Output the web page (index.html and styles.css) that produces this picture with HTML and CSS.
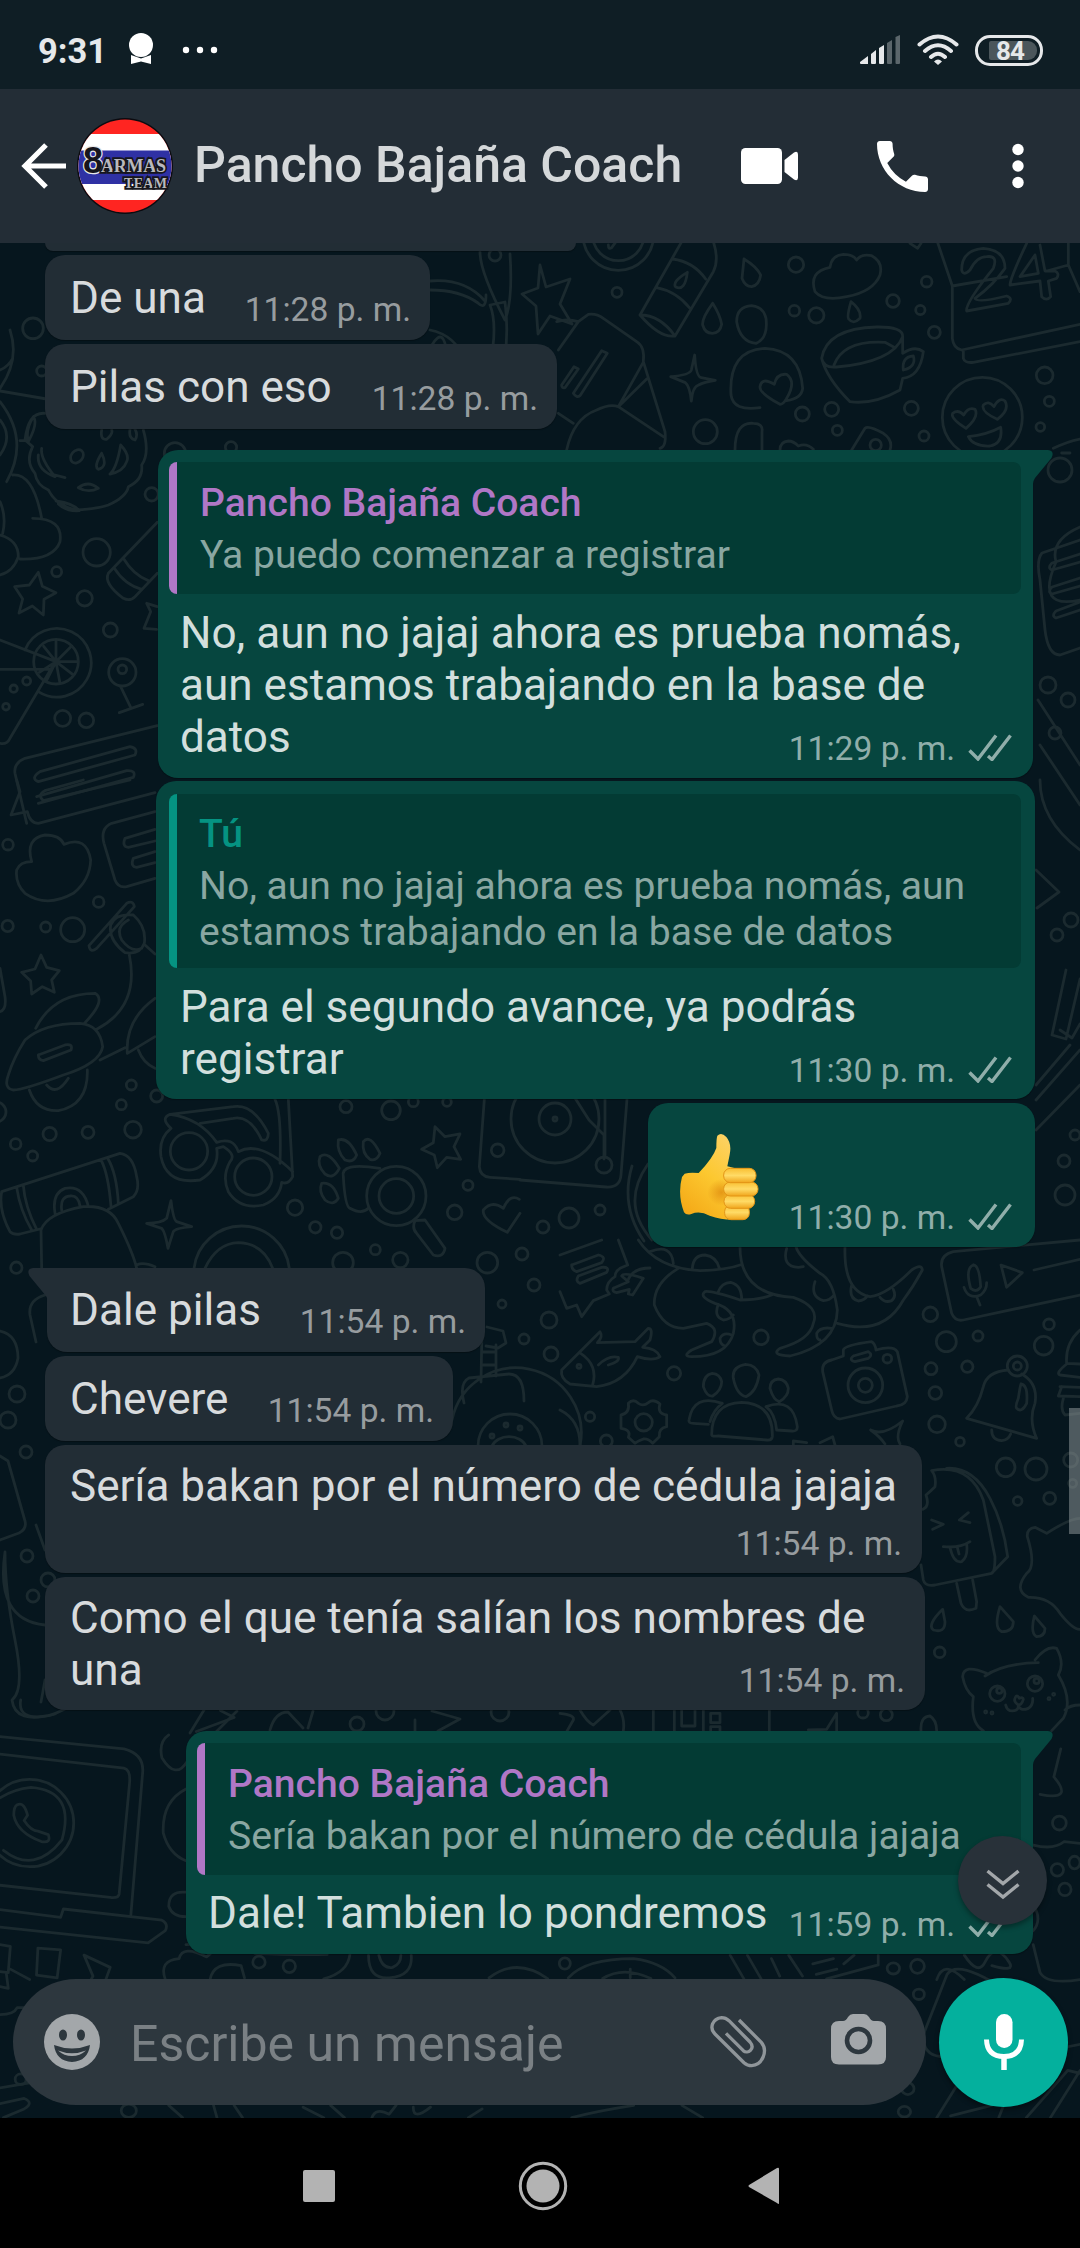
FILE: index.html
```html
<!DOCTYPE html>
<html lang="es">
<head>
<meta charset="utf-8">
<title>Pancho Bajaña Coach</title>
<link rel="stylesheet" href="styles.css">
</head>
<body>
<svg width="0" height="0" class="defs">
  <symbol id="ticks" viewBox="0 0 44 27"><path d="M1.5 16.5 L10 25 L28 1.5 M20 22 L24 25.500 L42.500 1.500" fill="none" stroke="currentColor" stroke-width="3.400"/></symbol>
  <symbol id="tail-out" viewBox="0 0 24 34"><path d="M0 0H19Q26 1 22.500 8L6 28Q4 31 4 34H0Z" fill="currentColor"/></symbol>
</svg>
<div class="screen">
  <header class="status">
    <span class="clock">9:31</span>
    <svg class="badge" width="26" height="32" viewBox="0 0 26 32"><circle cx="13" cy="12" r="12" fill="#fff"/><path d="M3 22l10 3.500 10-3.500v9l-10-2.500-10 2.500z" fill="#fff"/></svg>
    <svg class="more" width="36" height="8" viewBox="0 0 36 8" fill="#fff"><circle cx="4" cy="4" r="3.200"/><circle cx="18" cy="4" r="3.200"/><circle cx="32" cy="4" r="3.200"/></svg>
    <svg class="signal" width="41" height="30" viewBox="0 0 41 30"><g fill="#e6e8ea"><path d="M0 27l8-6v8H1q-1 0-1-1zM11 19l5-4v13q0 1-1 1h-3q-1 0-1-1zM19 13l5-3v18q0 1-1 1h-3q-1 0-1-1z"/></g><path d="M27 8l5-3v23q0 1-1 1h-3q-1 0-1-1zM35.500 2l4.500-2v28q0 1-1 1h-2.500q-1 0-1-1z" fill="#5b666b"/></svg>
    <svg class="wifi" width="42" height="32" viewBox="0 0 42 32" fill="none" stroke="#e6e8ea" stroke-width="4" stroke-linecap="round"><path d="M2.500 10.500Q21-5.500 39.500 10.500M8 17Q21 5.500 34 17M14 23Q21 16.500 28 23"/><path d="M21 31l-4-3.500q4-4 8 0z" fill="#e6e8ea" stroke="none"/></svg>
    <div class="battery"><span>84</span></div>
  </header>

  <header class="appbar">
    <svg class="back" width="46" height="46" viewBox="0 0 46 46" fill="none" stroke="#fff" stroke-width="5.200"><path d="M45 23H4M25 2L4 23L25 44"/></svg>
    <svg class="avatar" width="96" height="96" viewBox="0 0 96 96">
      <defs><clipPath id="round"><circle cx="48" cy="48" r="46.500"/></clipPath></defs>
      <circle cx="48" cy="48" r="48" fill="#0b0b10"/>
      <g clip-path="url(#round)"><path fill="#ff2521" d="M0 0h96v96H0z"/><path fill="#fff" d="M0 16h96v66H0z"/><path fill="#2f31a4" d="M0 32.500h96v33.500H0z"/></g>
      <g font-family="Liberation Serif, serif" font-weight="700" fill="#3a3a4a" stroke="#16161c" stroke-width="3.600" paint-order="stroke">
        <text x="6" y="55" font-size="36" font-family="Liberation Sans, sans-serif" fill="#16161c" stroke="#e8e8e8" stroke-width="2.400">8</text>
        <text x="24" y="54" font-size="18" textLength="65" fill="#b9b9bd">ARMAS</text>
        <text x="47" y="70" font-size="14" textLength="43" fill="#b9b9bd">TEAM</text>
      </g>
    </svg>
    <h1>Pancho Bajaña Coach</h1>
    <svg class="video" width="58" height="36" viewBox="0 0 58 36" fill="#fff"><rect width="41" height="36" rx="4.500"/><path d="M43.500 12L53 4.500q4-2 4 2v23q0 4-4 2L43.500 24z"/></svg>
    <svg class="phone" width="51" height="51" viewBox="3 3 18 18" fill="#fff"><path d="M6.620 10.790a15.150 15.150 0 0 0 6.590 6.590l2.200-2.200c.28-.28.67-.36 1.020-.25 1.120.37 2.320.57 3.570.57.550 0 1 .450 1 1V20c0 .550-.450 1-1 1C10.610 21 3 13.390 3 4c0-.550.450-1 1-1h3.500c.550 0 1 .450 1 1 0 1.250.200 2.450.570 3.570.110.350.030.740-.250 1.020z"/></svg>
    <svg class="kebab" width="12" height="46" viewBox="0 0 12 46" fill="#fff"><circle cx="6" cy="6.500" r="5.700"/><circle cx="6" cy="23" r="5.700"/><circle cx="6" cy="39.500" r="5.700"/></svg>
  </header>

  <main class="chat">
    <svg class="wallpaper" width="1080" height="1875" viewBox="0 243 1080 1875">
      <!-- top right: bottle, cloud, cup, calendar -->
      <g transform="translate(560 235) scale(.33333)">
        <circle cx="175" cy="0" r="106"/><circle cx="175" cy="0" r="77"/><path d="M145 30q0 15 10 8l20-28M365 20L240 240Q300 310 345 303L460 110Q478 75 460 20M338 72Q400 80 437 132M290 158Q350 170 388 218M240 240Q300 240 345 303M382 112Q335 140 347 156Q375 170 382 112"/>
        <path d="M552 72L546 130Q555 155 575 155Q598 150 602 120Q590 95 552 72M458 205Q425 250 428 270Q435 295 457 295Q480 295 485 268Q480 240 458 205M873 200Q860 245 866 252Q880 270 900 250Q905 225 873 200"/>
        <path d="M810 97Q815 60 850 58Q880 58 890 75Q905 55 935 62Q970 80 960 120Q940 170 860 185Q790 200 765 170Q745 110 810 97"/>
        <path d="M575 212Q530 215 530 260Q540 320 588 325Q625 310 618 250Q610 215 575 212M600 518Q520 530 513 480Q505 345 615 340Q720 345 728 460Q725 490 680 497M660 508Q598 475 600 455Q605 425 643 448Q650 415 680 418Q710 440 680 490Q670 508 660 508"/>
        <path d="M404 360q4 66 20 68l42 8q-35 5-50 14q-18 5-22 48q-5-45-18-55l-44-18q58-5 62-20z"/>
        <path d="M-10 260q30-10 65 0L85 238Q110 235 130 250L230 320Q255 335 250 380L315 590Q320 635 300 640M55 260L-5 345M248 385L175 515L310 605M20 645Q40 550 110 525Q150 505 175 515L260 432M-5 535l45 30M125 347L40 475Q50 490 60 482L142 355ZM42 395L5 450Q5 460 15 458L55 402Z"/>
        <path d="M785 370Q800 280 950 276Q1030 275 1028 305Q1000 380 830 396Q790 400 785 370Q800 430 870 500Q940 510 1020 465L1028 430Q1080 425 1090 350Q1065 330 1028 355V305M822 390Q850 315 975 322L1005 338M1030 405Q1025 365 1060 363Q1070 395 1030 405"/>
        <path d="M1132 20L1177 153L1340 125M1177 153V310Q1180 340 1205 345L1560 268M1210 345V370Q1215 385 1240 382L1560 320M1220 228Q1215 205 1300 100Q1315 60 1280 65Q1250 65 1230 105Q1210 125 1205 105Q1205 45 1270 40Q1335 45 1335 100Q1300 150 1245 190Q1250 205 1340 183Q1360 190 1345 205ZM1440 30L1455 108H1485Q1500 115 1490 130L1465 138L1472 185Q1460 200 1445 185L1440 138L1350 150Q1350 130 1400 25M1380 125L1435 115L1425 60ZM1460 108L1525 90V20M1525 90L1560 170"/>
        <circle cx="1267" cy="547" r="120"/><path d="M1218 580Q1170 550 1178 535Q1195 522 1211 540Q1225 515 1245 523Q1258 545 1218 580M1312 553Q1262 530 1270 510Q1285 495 1302 515Q1318 485 1335 498Q1350 525 1312 553M1225 605Q1280 600 1322 577Q1330 625 1290 633Q1240 635 1225 605M525 645Q525 560 580 565Q610 565 606 590V645M660 645q0-25 25-27q15 0 30 15q25-10 45 10M875 645L915 580Q925 570 970 595Q1000 615 990 645M1050 25l23 15 10-15M1480 640Q1520 620 1560 612M1505 654h25"/>
        <circle cx="171" cy="172" r="15"/><circle cx="708" cy="89" r="23"/><circle cx="703" cy="227" r="16"/><circle cx="769" cy="241" r="23"/><circle cx="999" cy="198" r="19"/><circle cx="1100" cy="140" r="16"/><circle cx="1081" cy="225" r="14"/><circle cx="1123" cy="292" r="18"/><circle cx="436" cy="590" r="36"/><circle cx="727" cy="537" r="21"/><circle cx="815" cy="523" r="21"/><circle cx="832" cy="586" r="15"/><circle cx="1054" cy="520" r="21"/><circle cx="1092" cy="603" r="15"/><circle cx="947" cy="630" r="17"/><circle cx="1454" cy="421" r="25"/><circle cx="1468" cy="499" r="15"/><circle cx="1441" cy="576" r="13"/>
      </g>
      <!-- top centre: star, carrot and pin -->
      <path d="M540 265l6 22 24-8-10 25 12 20-22-8-12 18-2-28-14-12 16-6zM430 281q35-3 55 20M430 290q30 0 48 13q8 8 8-8M490 365q8-40 0-60l15-3q4 30-1 65M480 252q0 20 25 68q8-20 5-66M430 330q25 5 35 30M432 345q12-20 15 10q20 5 20 30"/>
      <circle cx="495" cy="255" r="6"/>
      <!-- left: cookie, palette, citrus, message sheet -->
      <g transform="translate(0 330) scale(.33333)">
        <path d="M30 0Q60 90 0 175M0 120Q25 110 38 85M0 183L140 207M0 215Q90 330 20 455M0 270Q40 320 0 375M38 435Q100 430 125 565M98 565Q190 565 180 635Q160 690 60 687M0 515Q20 560 8 610M0 615Q55 630 55 680Q40 725 0 735"/>
        <path d="M135 250Q85 245 75 330L98 350Q75 395 105 430Q110 465 145 480Q170 530 230 540Q300 535 325 525Q380 500 385 470Q430 450 425 405Q450 370 430 300M85 335Q75 300 100 260Q115 280 85 335M60 332h15M125 355Q120 385 165 440Q110 420 115 375M165 435l30 8M168 513Q220 520 238 542Q200 545 175 522M235 473Q265 450 295 475Q265 490 235 473M330 432Q350 415 362 345Q390 375 380 395Q370 425 330 432M305 370Q280 410 295 418Q325 410 305 370M305 300Q300 330 320 328Q340 310 335 300M390 298Q385 325 405 330Q415 315 405 298"/><ellipse cx="231" cy="379" rx="17" ry="22" transform="rotate(40 231 379)"/>
        <path d="M115 727L127 769L168 788L132 808L130 855L97 828L57 849L68 807L44 770L88 765ZM472 577L325 730Q310 760 370 805Q390 815 405 800L472 730M343 715Q375 765 425 778M370 685Q400 735 445 752"/>
        <path d="M440 820L452 845L432 895L470 898M440 820l32 10"/>
        <circle cx="168" cy="995" r="67"/><path d="M75 960A103 103 0 1 1 115 1085M168 995V930M168 995l44-44M168 995h65M168 995l50 38M168 995l12 65M168 995l-30 60M168 995l-50 32M168 995l-37-46M168 995L0 930M150 1018H0M160 1005L30 1225Q20 1245 0 1240M362 1070L392 1132M358 1148L428 1123"/>
        <circle cx="367" cy="1027" r="41"/><circle cx="367" cy="1018" r="13"/><circle cx="290" cy="667" r="41"/><circle cx="170" cy="725" r="15"/><circle cx="254" cy="805" r="23"/><circle cx="331" cy="900" r="21"/><circle cx="188" cy="1165" r="24"/><circle cx="259" cy="1171" r="22"/><circle cx="80" cy="1053" r="12"/><circle cx="41" cy="1076" r="11"/><circle cx="18" cy="1130" r="10"/><circle cx="455" cy="493" r="20"/><circle cx="525" cy="370" r="32"/><circle cx="693" cy="352" r="17"/><circle cx="99" cy="-5" r="31"/><circle cx="125" cy="123" r="15"/>
        <path d="M472 1187L75 1285Q40 1300 45 1330L80 1480M120 1325L390 1250Q415 1255 405 1275L115 1355Q90 1345 120 1325M110 1400L380 1322Q410 1320 400 1342L115 1420"/>
      </g>
      <!-- left: cloud, plane, glasses, board, paw, lens -->
      <g transform="translate(0 780) scale(.33333)">
        <path d="M50 0L60 35L33 105L82 95Q90 130 115 130L465 38M135 32L250 0M130 62L390 0M135 32Q110 45 130 62M465 95L335 130Q300 145 312 190L345 300Q355 325 380 320L465 295M465 148L375 175Q365 200 385 202L465 183M465 215L400 235Q390 260 410 262L465 248"/>
        <path d="M95 245Q75 175 135 165Q180 165 192 193Q260 165 272 240Q270 300 220 340Q140 385 75 340Q45 310 50 270Q60 245 95 245M123 525L140 562L178 572L155 600L163 637L127 620L95 642L92 603L65 577L105 567ZM380 370Q400 360 403 380L290 505Q270 520 267 497ZM400 405Q440 440 433 490Q420 525 375 518Q325 480 332 435Q345 400 400 405M385 420Q345 440 365 480Q395 520 425 505M435 495L465 522M388 525Q420 680 290 748M107 745Q160 640 285 640Q320 660 255 728M75 780Q130 730 240 730Q300 735 308 800Q300 850 190 885Q70 930 40 930Q10 925 25 885Q40 835 75 780M115 825L195 795Q220 790 213 810L130 842Q115 840 115 825M88 930Q110 995 175 992Q265 975 262 870M140 915Q170 950 205 895M300 840L375 803M465 655Q375 720 382 820L465 770M415 810Q430 850 465 865"/>
        <path d="M0 565L15 650Q20 690 0 695M825 958Q845 1000 840 1150M865 958L878 1190Q865 1215 845 1207Q840 1255 790 1275Q720 1290 685 1235Q665 1190 690 1145Q710 1125 670 1100L650 1105Q660 1165 600 1200Q500 1215 483 1130Q475 1075 513 1045Q480 1015 510 1003Q600 1015 650 1087Q700 1070 715 1115Q780 1080 878 1175M510 1003L700 980Q760 970 805 1060Q805 1085 785 1080Q750 1005 700 1015L600 1030"/><circle cx="567" cy="1114" r="56"/><circle cx="760" cy="1190" r="56"/>
        <path d="M5 1235L360 1120Q400 1125 410 1190Q420 1230 400 1250L325 1288M5 1235Q-5 1290 30 1355Q40 1365 60 1362L120 1347M50 1222Q60 1290 95 1350M70 1217Q75 1280 110 1348M303 1140Q325 1180 333 1280M323 1135Q350 1180 355 1270M165 1300Q155 1240 195 1225Q250 1215 265 1280M185 1290Q180 1250 210 1248Q235 1245 240 1278M125 1465L123 1350Q140 1300 250 1280Q330 1275 355 1330Q400 1420 410 1465M513 1262Q520 1320 530 1325L575 1340Q525 1345 520 1355Q515 1370 504 1405Q495 1355 485 1345L440 1330Q485 1330 500 1315ZM582 1465A144 144 0 0 1 868 1465M615 1465Q650 1390 715 1388Q790 1390 818 1465M410 1455q20-10 55 5"/>
        <path d="M1015 1080Q1045 1070 1070 1125Q1060 1150 1035 1140Q1010 1115 1015 1080M1090 1085Q1110 1060 1140 1120Q1130 1145 1110 1138Q1085 1120 1090 1085M960 1130Q985 1110 1018 1165Q1000 1200 975 1182Q950 1155 960 1130M965 1210Q1000 1205 1015 1255Q1000 1280 975 1260Q955 1235 965 1210M1140 1165Q1020 1145 1030 1190Q1035 1280 1050 1285Q1085 1305 1105 1285"/><circle cx="1189" cy="1248" r="89"/><circle cx="1189" cy="1248" r="52"/><path d="M1245 1322Q1235 1345 1250 1360L1300 1425Q1330 1435 1335 1405L1275 1320ZM1305 1040L1335 1070L1380 1062L1362 1100L1382 1138L1340 1132L1312 1163L1303 1125L1265 1108L1300 1088ZM1453 958L1438 1160Q1440 1190 1470 1192L1560 1198M1522 1357Q1445 1320 1450 1290Q1475 1260 1510 1285Q1530 1240 1558 1258M1522 1357L1560 1300"/>
        <circle cx="24" cy="194" r="16"/><circle cx="23" cy="438" r="17"/><circle cx="137" cy="441" r="15"/><circle cx="218" cy="449" r="36"/><circle cx="296" cy="366" r="16"/><circle cx="394" cy="915" r="15"/><circle cx="364" cy="974" r="15"/><circle cx="470" cy="948" r="18"/><circle cx="-12" cy="996" r="30"/><circle cx="149" cy="1062" r="20"/><circle cx="264" cy="1057" r="18"/><circle cx="399" cy="1049" r="25"/><circle cx="47" cy="1092" r="16"/><circle cx="98" cy="1128" r="15"/><circle cx="49" cy="1463" r="17"/><circle cx="885" cy="1283" r="23"/><circle cx="946" cy="1342" r="17"/><circle cx="1011" cy="1358" r="17"/><circle cx="1126" cy="1409" r="15"/><circle cx="1201" cy="1440" r="23"/><circle cx="1029" cy="1448" r="31"/><circle cx="1404" cy="1216" r="15"/><circle cx="1364" cy="1297" r="22"/><circle cx="1462" cy="1448" r="31"/><circle cx="1038" cy="980" r="18"/><circle cx="1173" cy="991" r="28"/><circle cx="1240" cy="965" r="15"/><circle cx="1341" cy="966" r="13"/><circle cx="1493" cy="1111" r="19"/>
      </g>
      <!-- centre: turntable and dinosaur back -->
      <path d="M627 1099L621 1175Q620 1188 606 1187L520 1180M605 1098v58M575 1098l14 22 15 15v24M632 1166q-12 40 12 75M648 1164q-28 40 4 76M628 1280q5-12 22-12"/>
      <circle cx="555" cy="1119" r="44"/><circle cx="555" cy="1119" r="16"/><circle cx="555" cy="1119" r="2"/><circle cx="604" cy="1165" r="8"/><circle cx="569" cy="1218" r="10"/><circle cx="600" cy="1210" r="5"/><circle cx="543" cy="1227" r="6"/><circle cx="522" cy="1254" r="6"/>
      <!-- right edge: papers and ruler -->
      <path d="M1080 527Q1050 540 1056 562Q1035 610 1080 600M1080 540L1042 553Q1036 560 1040 580L1045 630Q1048 655 1060 655L1080 648M1080 554l-28 9q-5 5 0 7l28-8M1080 578l-28 9q-5 5 0 7l28-8M1080 602l-24 9q-5 5 0 7l24-8M1038 700l42 65M1040 745l40 60M1040 780Q1040 820 1080 850M1036 870l23 22-22 16M1066 970l-14 65 14 4 14-60M1060 1030l12 8 8-14M1036 1100L1080 1050M1036 1130L1080 1085M1036 1085l34-40"/>
      <circle cx="1060" cy="470" r="12"/><circle cx="1048" cy="685" r="8"/><circle cx="1068" cy="700" r="7"/><circle cx="1055" cy="733" r="6"/><circle cx="1071" cy="920" r="7"/><circle cx="1057" cy="935" r="6"/><circle cx="1075" cy="1135" r="5"/><circle cx="1064" cy="1161" r="6"/><circle cx="1065" cy="1195" r="10"/>
      <!-- middle right: dinosaur, fish, group, camera, bell, ice cream, cat -->
      <g transform="translate(560 1240) scale(.33333)">
        <path d="M0 45L125 0M175 0L203 75L180 85Q165 95 165 110Q140 125 140 150L148 162L100 182L65 230L50 195L20 205L0 155M35 75L115 45Q140 50 125 68L50 95Q35 90 35 75M55 108L125 82Q150 80 140 97L60 130Q45 125 55 108M160 145L205 125L185 108Q190 95 250 115L218 165L205 162L208 148L170 158Q155 155 160 145"/>
        <path d="M235 0Q290 85 420 92Q500 90 540 75M355 85Q280 130 283 195Q310 265 370 265L440 250Q480 265 455 305L395 330Q365 350 395 350Q500 350 520 280Q535 210 465 190Q415 170 435 155Q450 150 540 180Q600 180 635 165M540 20Q540 165 700 172Q780 200 760 250Q750 300 660 325Q630 345 690 348Q830 315 832 210Q820 120 780 100Q715 50 708 20M855 20Q850 155 930 170Q980 165 1055 90Q1085 70 1087 90Q1060 140 1030 180Q970 290 832 250M270 35Q335 10 340 70M397 85Q400 45 435 45Q470 50 478 85M475 155Q485 128 512 127Q545 135 545 178M475 193Q460 230 490 240Q510 238 520 225M515 285Q490 275 480 295Q480 315 495 318M765 125Q750 170 790 182Q810 182 822 165M815 265Q780 260 770 280Q770 300 780 300M680 25Q665 80 715 82L730 80M875 135Q865 175 895 183Q915 180 922 168M960 172Q975 190 995 182Q1010 170 1000 148"/>
        <path d="M1560 0L1180 35Q1140 45 1145 80L1175 220Q1185 245 1210 240L1560 165M1240 75Q1258 75 1262 140Q1250 160 1232 145Q1215 85 1240 75M1212 142Q1225 180 1262 165Q1280 150 1280 128M1250 170l10 25M1323 75L1387 98L1340 142ZM1422 90L1560 58"/>
        <path d="M5 390L120 275Q130 290 112 308L225 305L265 265Q280 265 270 300L248 322Q290 325 300 350Q280 365 232 350Q195 430 110 440L30 432Q0 415 5 390M62 340Q115 375 98 435M115 375Q145 345 175 352Q180 365 145 375"/><circle cx="57" cy="379" r="6"/>
        <path d="M205 490Q220 475 235 490Q250 500 265 488Q280 475 300 492Q290 520 320 525V560Q295 565 298 590L278 610Q265 595 250 597Q230 605 225 610L205 592Q215 570 183 565V525Q210 520 205 490"/><circle cx="251" cy="547" r="26"/>
        <path d="M557 373Q515 380 520 415Q530 465 558 470Q590 455 597 405Q590 375 557 373M457 400Q430 405 430 440Q440 470 458 468Q485 450 485 425Q480 402 457 400M655 417Q630 420 630 445Q640 480 658 485Q685 470 685 445Q680 420 655 417M455 585Q455 490 545 487Q640 490 637 590Q635 602 620 600L475 588Q455 590 455 585M487 490Q400 460 387 540Q385 550 400 550L445 553M487 490Q460 510 450 545M618 500Q700 470 712 560Q712 575 695 573L650 570M618 500Q645 520 650 570"/>
        <path d="M815 360L850 348V330Q855 315 935 305Q945 310 948 330Q1000 315 1012 335L1042 470Q1040 495 1010 498L840 537Q820 535 815 510L788 395Q785 365 815 360M880 348L925 335Q940 345 925 355L885 365Q865 360 880 348"/><circle cx="916" cy="436" r="52"/><circle cx="916" cy="436" r="21"/><circle cx="982" cy="356" r="13"/>
        <path d="M1345 390Q1280 395 1270 440Q1255 500 1220 535L1430 595Q1405 540 1425 490Q1435 430 1385 402M1383 432Q1405 435 1400 490Q1385 520 1370 505Q1365 500 1375 475Q1380 440 1383 432M1295 570Q1295 600 1325 602Q1345 600 1352 582"/><circle cx="1372" cy="378" r="30"/><circle cx="1372" cy="378" r="12"/>
        <path d="M1560 270Q1515 310 1520 370L1560 372M1520 372Q1485 400 1500 405L1560 412M1500 440L1560 442M1560 470L1495 468L1505 440M1510 475Q1500 510 1515 525L1560 520M700 615V603L740 608M780 608L818 590L825 615M932 570Q970 590 1028 543Q1005 590 1020 612M932 570Q960 590 975 612M0 510Q60 540 60 615"/>
        <path d="M1115 692Q1230 670 1270 780L1305 950Q1305 995 1295 1000L1125 1035Q1095 1040 1090 1020L1083 975M1295 1000L1343 950Q1330 850 1290 775Q1240 680 1160 685M1115 692Q1130 710 1125 740Q1110 755 1098 765Q1110 800 1088 808M1115 840L1150 853L1118 868M1225 818L1198 840L1230 848M1150 920Q1200 925 1230 905M1170 922Q1180 970 1205 965Q1225 950 1220 912M1192 922l5 20M1190 1030L1203 1090Q1215 1120 1248 1105L1250 1085L1238 1020"/>
        <path d="M1560 835Q1530 835 1460 880L1425 862Q1400 865 1402 890Q1430 980 1400 1000Q1360 1050 1405 1072Q1470 1070 1500 1120Q1540 1170 1560 1168M1148 1108Q1100 1155 1120 1170Q1155 1180 1155 1145ZM1320 1100Q1300 1165 1325 1175Q1360 1175 1360 1145ZM1423 1128Q1410 1180 1430 1190Q1455 1190 1455 1165Z"/>
        <path d="M1275 1308Q1330 1270 1435 1268M1280 1300Q1210 1270 1208 1310Q1215 1350 1240 1370Q1230 1450 1270 1472M1425 1260Q1460 1215 1490 1225Q1515 1270 1495 1305Q1540 1380 1510 1435L1475 1472M1365 1375Q1370 1360 1378 1375Q1390 1370 1390 1378Q1385 1395 1375 1395Q1360 1385 1365 1375M1375 1395Q1380 1415 1405 1405Q1420 1395 1418 1375M1375 1398Q1375 1415 1350 1412Q1340 1408 1337 1395M1560 1395Q1530 1395 1515 1410"/><circle cx="1312" cy="1361" r="23"/><circle cx="1425" cy="1331" r="23"/><circle cx="1318" cy="1352" r="8"/><circle cx="1430" cy="1323" r="8"/><circle cx="1277" cy="1416" r="3"/><circle cx="1296" cy="1419" r="3"/><circle cx="1467" cy="1376" r="3"/><circle cx="1481" cy="1363" r="3"/>
        <path d="M0 1420Q45 1425 40 1440L20 1475M60 1410Q80 1445 100 1455L150 1410M180 1410Q195 1440 190 1472M280 1410V1472M343 1410V1472M365 1410V1458H405V1410M430 1410V1472M452 1420H480V1448H452ZM452 1472V1460H480V1472M628 1410V1472M745 1470L800 1468L830 1420V1472M1083 1472Q1080 1430 1110 1428Q1130 1440 1130 1472"/>
        <circle cx="603" cy="292" r="22"/><circle cx="342" cy="400" r="20"/><circle cx="90" cy="530" r="14"/><circle cx="139" cy="603" r="18"/><circle cx="1111" cy="223" r="22"/><circle cx="1159" cy="305" r="30"/><circle cx="1254" cy="288" r="15"/><circle cx="1113" cy="386" r="18"/><circle cx="1222" cy="380" r="17"/><circle cx="1126" cy="459" r="19"/><circle cx="1131" cy="553" r="25"/><circle cx="1200" cy="605" r="13"/><circle cx="1467" cy="253" r="16"/><circle cx="1451" cy="317" r="28"/><circle cx="1337" cy="682" r="28"/><circle cx="1428" cy="687" r="33"/><circle cx="1373" cy="783" r="13"/><circle cx="1469" cy="775" r="18"/><circle cx="1532" cy="660" r="21"/><circle cx="1538" cy="730" r="12"/><circle cx="1139" cy="1237" r="16"/><circle cx="909" cy="1418" r="16"/><circle cx="979" cy="1424" r="18"/>
      </g>
      <!-- guitar beside the received messages -->
      <path d="M487 1327l16 4 3 12-8 5-12-2M482 1327l-1 55M496 1345v31M482 1352h14M482 1365h14M464 1403q-5-20 5-25l40-4q15 0 15 27M452 1420a65 65 0 0 1 128 26M478 1446a32 32 0 0 1 64 0M492 1446a18 14 0 0 1 34 0"/>
      <circle cx="534" cy="1285" r="6"/><circle cx="549" cy="1320" r="8"/><circle cx="524" cy="1339" r="5"/><circle cx="551" cy="1354" r="7"/><circle cx="506" cy="1425" r="2"/><circle cx="520" cy="1428" r="2"/><circle cx="492" cy="1436" r="2"/><circle cx="502" cy="1304" r="4"/>
      <path d="M45 1295Q28 1300 30 1315L36 1342M0 1331Q18 1335 18 1358Q15 1375 0 1378M0 1456l8 5 17 60q2 8-6 12L0 1540M36 1525l9 25M5 1552Q-5 1620 45 1625M5 1552Q5 1590 15 1640Q25 1690 12 1700Q15 1725 55 1714M45 1680l-4 22M190 1733l14-23M215 1733l22-22M270 1730q5-18 18-18l15 16M308 1728l5-17M415 1720l0 12M432 1711l28 8-22 12"/>
      <circle cx="17" cy="1394" r="8"/><circle cx="8" cy="1420" r="8"/><circle cx="26" cy="1452" r="6"/><circle cx="27" cy="1556" r="6"/><circle cx="33" cy="1596" r="6"/><circle cx="48" cy="1580" r="7"/><circle cx="357" cy="1724" r="7"/><circle cx="500" cy="1712" r="9"/><circle cx="385" cy="1711" r="9"/>
      <!-- bottom: laptop, blocks, calculator, cup and cutlery -->
      <g transform="translate(0 1700) scale(.6888 .3495)">
        <path d="M0 105L180 140Q210 155 207 210L190 615M0 155L180 195Q190 200 188 240L173 555Q172 568 160 565L0 530M0 600L88 622L92 598L235 630Q245 640 240 660L215 695L0 650"/><ellipse cx="43" cy="352" rx="64" ry="125"/><path d="M5 430Q50 500 90 400Q110 260 45 250Q20 255 0 280M25 300Q35 290 40 330L35 345Q45 375 55 375L70 385Q75 410 60 405Q25 380 20 330Q20 305 25 300M30 0Q25 60 70 45Q80 40 95 25M245 100Q230 120 235 165Q255 230 272 175M320 30L340 50L285 90M270 255Q235 290 237 380Q245 440 270 460M270 550Q245 545 245 590Q250 620 270 620"/>
        <path d="M0 700l15 5-3 75-12-3M55 710l33 5-5 80-30-8zM15 770l28 30M0 820l12 5-3-45M122 730L160 765L150 820L125 825L135 790ZM240 800Q230 745 260 740Q265 700 300 735Q330 690 270 700M305 800Q310 745 350 760L355 795M535 730q0 70 30 65q35-5 32-65M550 730q5 40 20 35q12-10 12-35M370 725Q430 730 475 728M470 798Q505 780 508 728M710 795Q750 735 795 797M825 795Q850 740 920 740Q960 750 980 795M875 797Q905 760 945 797M915 770v25M1060 730l20 68M1085 730l20 68M1120 740l12 50M1145 730l20 60M1180 755l30-15M1185 785l30-15M1240 730l-15 25M1200 798l75-40v-28"/>
        <path d="M1360 800Q1370 740 1400 800M1375 785Q1390 740 1460 830M1375 785L1340 960Q1340 1015 1365 1020M1400 730Q1420 790 1430 750Q1445 690 1465 750Q1475 780 1440 760M1500 700L1510 780Q1520 815 1568 800M1500 415Q1530 430 1545 405L1568 410M1510 270Q1560 290 1530 220L1540 140M1500 590A30 55 0 0 1 1500 660M1360 1195L1390 1100M1380 1190L1440 1160M1450 1195L1465 1120M1525 1195L1568 1060M1490 1195L1550 1060L1568 1068M1530 1000L1568 985M0 1110l45-15M0 1155l35-15q15 12 0 30L5 1195M0 900q20 0 25-20h10M245 1160l20 35M310 1160l5 35M340 1160l12 35M440 1165l30 30M480 1160l20 35M540 1195q5-30 25-10l10-25M600 1165q0 40 25 0M700 1170l-20 25M830 1195q40-20 90-35M990 1160l30 35"/>
        <ellipse cx="30" cy="1085" rx="8" ry="15"/><ellipse cx="187" cy="1175" rx="11" ry="19"/><ellipse cx="376" cy="750" rx="9" ry="17"/><ellipse cx="420" cy="762" rx="9" ry="18"/><ellipse cx="820" cy="754" rx="8" ry="16"/><ellipse cx="1297" cy="768" rx="9" ry="16"/><ellipse cx="1332" cy="762" rx="10" ry="20"/><ellipse cx="1334" cy="842" rx="8" ry="15"/><ellipse cx="1318" cy="1112" rx="9" ry="17"/><ellipse cx="1538" cy="352" rx="10" ry="20"/><ellipse cx="1535" cy="486" rx="9" ry="18"/><ellipse cx="1560" cy="465" rx="8" ry="18"/><ellipse cx="1546" cy="542" rx="9" ry="18"/><ellipse cx="1313" cy="1178" rx="9" ry="15"/>
      </g>
    </svg>

    <section class="thread">
      <div class="msg in clipped"></div>
      <div class="msg in one w-de"><p>De una</p><time>11:28 p. m.</time></div>
      <div class="msg in one w-pilas"><p>Pilas con eso</p><time>11:28 p. m.</time></div>

      <div class="msg out first h-prueba">
        <svg class="tail"><use href="#tail-out"/></svg>
        <blockquote><b>Pancho Bajaña Coach</b><span>Ya puedo comenzar a registrar</span></blockquote>
        <div class="row"><p>No, aun no jajaj ahora es prueba nomás,<br>aun estamos trabajando en la base de<br>datos</p><time>11:29 p. m.<svg class="ticks"><use href="#ticks"/></svg></time></div>
      </div>
      <div class="msg out h-avance">
        <blockquote class="own"><b>Tú</b><span>No, aun no jajaj ahora es prueba nomás, aun<br>estamos trabajando en la base de datos</span></blockquote>
        <div class="row"><p>Para el segundo avance, ya podrás<br>registrar</p><time>11:30 p. m.<svg class="ticks"><use href="#ticks"/></svg></time></div>
      </div>
      <div class="msg out h-thumb">
        <div class="row">
          <svg class="thumb" width="82" height="88" viewBox="0 0 246 264" role="img" aria-label="👍">
            <defs>
              <linearGradient id="hand" x1="0" y1="1" x2=".7" y2="0"><stop offset="0" stop-color="#f3a312"/><stop offset=".55" stop-color="#fcc830"/><stop offset="1" stop-color="#fdd267"/></linearGradient>
              <linearGradient id="finger" x1="0" y1="0" x2="0" y2="1"><stop offset="0" stop-color="#f9bf32"/><stop offset=".5" stop-color="#ffdb66"/><stop offset="1" stop-color="#f0a51c"/></linearGradient>
              <radialGradient id="shade"><stop offset="0" stop-color="#e08d10" stop-opacity=".8"/><stop offset="1" stop-color="#e08d10" stop-opacity="0"/></radialGradient>
            </defs>
            <path d="M20 122Q35 117 62 120Q105 75 115 45Q115 15 118 8Q130-4 145 12Q162 32 155 65L148 100Q175 110 215 106L205 255Q150 267 95 248Q65 232 40 243Q25 248 18 238Q-2 185 12 132Z" fill="url(#hand)"/>
            <ellipse cx="130" cy="178" rx="42" ry="40" fill="url(#shade)"/>
            <g fill="url(#finger)" stroke="#e39516" stroke-width="3"><rect x="140" y="216" width="74" height="44" rx="19"/><rect x="138" y="184" width="92" height="42" rx="20"/><rect x="137" y="147" width="103" height="42" rx="20"/><rect x="137" y="106" width="97" height="43" rx="20"/></g>
          </svg>
          <time>11:30 p. m.<svg class="ticks"><use href="#ticks"/></svg></time>
        </div>
      </div>

      <div class="msg in first one w-dale"><svg class="tail"><use href="#tail-out"/></svg><p>Dale pilas</p><time>11:54 p. m.</time></div>
      <div class="msg in one w-chevere"><p>Chevere</p><time>11:54 p. m.</time></div>
      <div class="msg in below w-seria"><p>Sería bakan por el número de cédula jajaja</p><time>11:54 p. m.</time></div>
      <div class="msg in multi w-como"><p>Como el que tenía salían los nombres de<br>una</p><time>11:54 p. m.</time></div>

      <div class="msg out first h-pondremos">
        <svg class="tail"><use href="#tail-out"/></svg>
        <blockquote><b>Pancho Bajaña Coach</b><span>Sería bakan por el número de cédula jajaja</span></blockquote>
        <div class="row"><p>Dale! Tambien lo pondremos</p><time>11:59 p. m.<svg class="ticks"><use href="#ticks"/></svg></time></div>
      </div>
    </section>

    <footer class="composer">
      <div class="field">
        <svg class="smile" width="56" height="56" viewBox="0 0 56 56"><circle cx="28" cy="28" r="28" fill="#a3a7aa"/><g fill="#2d373e"><ellipse cx="19" cy="21" rx="4" ry="5.500"/><ellipse cx="37" cy="21" rx="4" ry="5.500"/><path d="M10 31Q28 38 46 31Q44 47 28 48Q12 47 10 31Z"/></g><path d="M14 36.500Q28 42 42 36.500Q36 42 28 42Q20 42 14 36.500Z" fill="#a3a7aa"/></svg>
        <span class="placeholder">Escribe un mensaje</span>
        <svg class="clip" width="58" height="52" viewBox="0 0 174 156" fill="none" stroke="#8f9599" stroke-width="10"><path d="M90 12L157 79C178 104 160 148 128 149Q115 149 105 140L18 54C0 36 10 8 38 5Q50 5 60 14L123 78C140 98 116 116 103 104L51 52"/></svg>
        <svg class="camera" width="55" height="52" viewBox="0 0 55 52"><path d="M8 8H12Q15 8 17 4Q19 1 22 1H33Q36 1 38 4Q40 8 43 8H47Q55 8 55 16V44Q55 51.500 47 51.500H8Q0 51.500 0 44V16Q0 8 8 8Z" fill="#a3a7aa"/><circle cx="27.500" cy="27.500" r="11.500" fill="#a3a7aa" stroke="#2d373e" stroke-width="4.600"/></svg>
      </div>
      <div class="mic"><svg width="42" height="58" viewBox="0 0 42 58"><rect x="13" y="1" width="16.500" height="34" rx="8.200" fill="#fff"/><path d="M3.500 26.500Q4 43.500 21 43.500T38.500 26.500" fill="none" stroke="#fff" stroke-width="5"/><path d="M21 42V57" stroke="#fff" stroke-width="5.500"/></svg></div>
    </footer>
    <div class="jump"><svg width="34" height="32" viewBox="0 0 34 32" fill="none" stroke="#a3a7aa" stroke-width="3.400"><path d="M1.500 2L17 14.500L32.500 2M1.500 15.500L17 28L32.500 15.500"/></svg></div>
    <div class="scrollbar"></div>
  </main>

  <nav class="navbar">
    <svg width="32" height="32"><rect width="32" height="32" rx="2" fill="#b3b3b3"/></svg>
    <svg width="50" height="50" viewBox="0 0 50 50"><circle cx="25" cy="25" r="22.700" fill="none" stroke="#b3b3b3" stroke-width="3"/><circle cx="25" cy="25" r="16.500" fill="#b3b3b3"/></svg>
    <svg width="32" height="38" viewBox="0 0 32 38"><path d="M31 2V36Q31 38 29 36L1 20Q0 19 1 18L29 1Q31 0 31 2Z" fill="#b3b3b3"/></svg>
  </nav>
</div>
</body>
</html>
```
FILE: styles.css
```css
* { box-sizing: border-box; }
body { margin: 0; background: #000; font-family: Roboto, "Noto Sans", sans-serif; }
p, h1, blockquote { margin: 0; }
svg { display: block; flex: none; }
.defs { position: absolute; }
.screen { width: 1080px; height: 2248px; display: flex; flex-direction: column; overflow: hidden; }

.status { height: 89px; background: #0f1e25; display: flex; align-items: center; padding: 11px 37px 0 38px; color: #e6e8ea; }
.clock { width: 90px; font-size: 34.5px; font-weight: 700; line-height: 40px; padding-top: 1px; }
.badge { margin-bottom: 2px; }
.more { margin-left: 28px; }
.signal { margin-left: auto; margin-right: 16px; }
.wifi { margin-right: 16px; }
.battery { width: 68px; height: 31px; border: 3px solid #e6e8ea; border-radius: 15px; padding: 3px 3px 3px 11px; }
.battery span { display: block; width: 48px; height: 19px; border-radius: 2px 9px 9px 2px; background: #4b565b; font-size: 26px; font-weight: 700; line-height: 20px; text-indent: 7px; letter-spacing: -1px; }

.appbar { height: 154px; background: #232d36; display: flex; align-items: center; padding-left: 21px; }
.avatar { margin-left: 10px; overflow: visible; }
.appbar h1 { width: 544px; margin: -3px 0 0 21px; color: #d5d8da; font-size: 50px; font-weight: 500; line-height: 60px; white-space: nowrap; }
.video { margin-left: 3px; }
.phone { margin-left: 78px; }
.kebab { margin-left: 84px; }

.chat { height: 1875px; background: #06161e; position: relative; overflow: hidden; display: flex; flex-direction: column; }
.wallpaper { position: absolute; inset: 0; fill: none; stroke: #1b2a2f; stroke-width: 2.8; stroke-linejoin: round; stroke-linecap: round; }
.wallpaper * { vector-effect: non-scaling-stroke; }
.thread { position: relative; height: 1736px; display: flex; flex-direction: column; align-items: flex-start; color: #d8dbdd; font-size: 44.1px; line-height: 52px; white-space: nowrap; }

.msg { position: relative; border-radius: 20px; margin-top: 4px; display: flex; flex: none; box-shadow: 0 1px 1px rgba(0, 0, 0, .3); }
.msg time { flex: none; font-size: 33.6px; line-height: 39px; display: flex; align-items: center; }
.in { margin-left: 45px; background: #222d35; padding: 16px 19px 0 25px; justify-content: space-between; }
.in time { color: #979c9f; height: 39px; margin-top: 18px; }
.clipped { width: 531px; height: 8px; margin-top: 0; padding: 0; border-radius: 0 0 20px 20px; }
.one { height: 85px; padding-top: 17px; }
.w-de { width: 385px; }
.w-pilas { width: 512px; }
.w-dale { width: 440px; }
.w-chevere { width: 408px; }
.below { width: 877px; height: 128px; padding-top: 15px; flex-direction: column; }
.below time { align-self: flex-end; margin: 0 1px 10px 0; }
.multi { width: 880px; height: 133px; padding-top: 15px; }
.multi time { margin: 69px 1px 0 -200px; }

.out { align-self: flex-end; margin-right: 47px; background: #06463f; color: #d2dfdd; flex-direction: column; padding: 12px 12px 0 11px; }
.out.first { margin-top: 21px; border-top-right-radius: 0; }
.out time { color: #90aeaa; margin-right: 9px; margin-bottom: -5px; }
.out .row { flex: 1; display: flex; align-items: flex-end; justify-content: space-between; padding: 0 0 15px 11px; }
.out .row p { flex: 1; min-width: 0; }
.ticks { width: 44px; height: 27px; margin-left: 13px; margin-top: -3px; }
.h-prueba { width: 875px; height: 328px; }
.h-avance { width: 879px; height: 318px; margin-right: 45px; margin-top: 3px; padding: 13px 14px 0 13px; }
.h-thumb { width: 387px; height: 144px; margin-right: 45px; padding: 12px 14px 0 13px; }
.h-avance .row { padding-bottom: 14px; }
.thumb { margin: 0 0 11px 6px; }
.h-pondremos { width: 847px; height: 223px; }

blockquote { flex: none; background: #033b34; border-left: 8px solid #b077c6; border-radius: 8px; height: 132px; padding: 12px 0 0 23px; font-size: 39.1px; line-height: 46px; color: #8aa7a2; }
blockquote b, blockquote span { display: block; }
blockquote b { color: #b077c6; font-weight: 500; line-height: 58px; }
.own { height: 174px; border-color: #059382; padding: 11px 0 0 22px; }
.own b { color: #059382; }

.tail { position: absolute; top: 0; right: -20px; width: 24px; height: 34px; color: #06463f; }
.in.first { margin-top: 21px; margin-left: 47px; height: 84px; width: 438px; padding: 16px 19px 0 23px; border-top-left-radius: 0; }
.in .tail { right: auto; left: -19px; transform: scaleX(-1); color: #222d35; }

.composer { position: relative; display: flex; align-items: center; padding: 0 12px 0 13px; height: 126px; }
.field { width: 913px; height: 126px; border-radius: 63px; background: #2d373e; display: flex; align-items: center; padding-left: 31px; }
.placeholder { width: 576px; margin-left: 30px; padding-top: 3px; color: #7a8084; font-size: 50px; line-height: 58px; }
.clip { margin-left: 3px; }
.camera { margin-left: 64px; margin-bottom: 6px; }
.mic { width: 129px; height: 129px; flex: none; border-radius: 50%; background: #04b09d; margin-left: 13px; display: flex; align-items: center; justify-content: center; box-shadow: 0 3px 5px rgba(0, 0, 0, .4); }
.jump { position: absolute; left: 958px; top: 1593px; width: 89px; height: 89px; border-radius: 50%; background: #283139; display: flex; align-items: center; justify-content: center; padding-top: 8px; box-shadow: 0 3px 5px rgba(0, 0, 0, .35); }
.scrollbar { position: absolute; right: 0; top: 1165px; width: 11px; height: 126px; background: rgba(150, 157, 160, .5); }

.navbar { height: 130px; background: #000; display: flex; align-items: center; padding: 6px 0 0 303px; }
.navbar svg + svg { margin-left: 183px; }
.navbar svg:last-child { margin-left: 180px; }
```
